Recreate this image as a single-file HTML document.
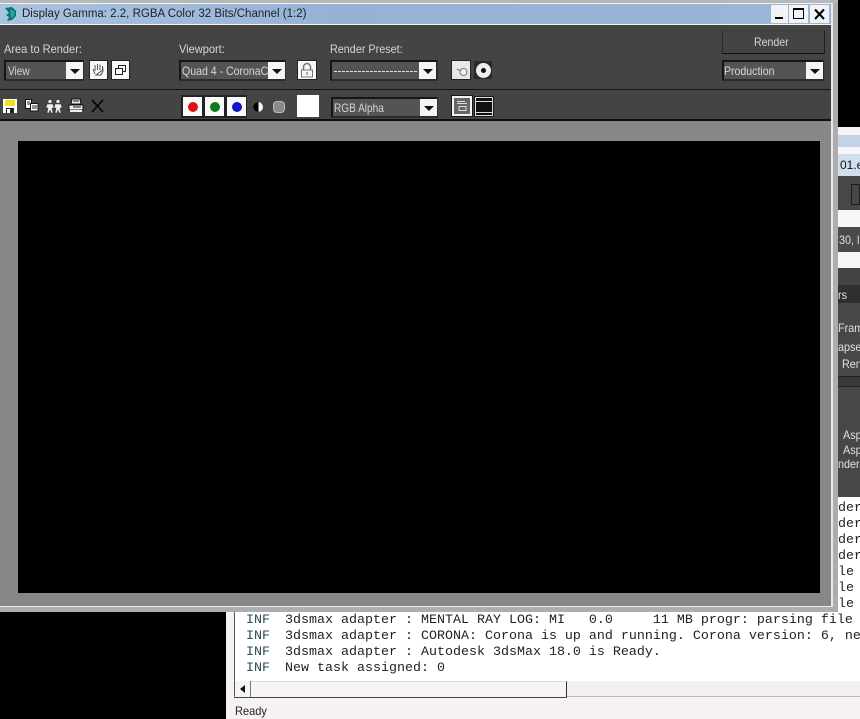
<!DOCTYPE html>
<html><head><meta charset="utf-8">
<style>
html,body{margin:0;padding:0;background:#000}
#p{position:relative;width:860px;height:719px;overflow:hidden;background:#000;font-family:"Liberation Sans",sans-serif}
#p div,#p svg{position:absolute}
.t{color:#d6d6d4;font-size:12px;white-space:nowrap;line-height:14px;transform-origin:0 50%}
.dd{background:#545552;border:2px solid #161616;border-right-color:#2c2c2c;border-bottom-color:#2c2c2c;box-sizing:border-box;height:21px;overflow:hidden}
.ar{background:#f4f4f4;width:17px;height:17px;top:60px}
.ar:after{content:"";position:absolute;left:4px;top:7px;border:5px solid transparent;border-top:5px solid #111;border-bottom:0}
.wb{background:#f8f8f8;box-shadow:0 0 0 1px #222}
.m{font-family:"Liberation Mono",monospace;font-size:13.33px;line-height:16px;color:#222;white-space:pre}
.inf{color:#2d4a5c}
.rt{color:#e0e0e0;font-size:12px;line-height:14px;white-space:nowrap;transform-origin:0 50%;transform:scaleX(.9)}
</style></head><body><div id="p">

<!-- background right-hand app -->
<div style="left:838px;top:127px;width:22px;height:376px;background:#474846"></div>
<div style="left:838px;top:127px;width:22px;height:8px;background:#f4f4f6"></div>
<div style="left:838px;top:135px;width:22px;height:12px;background:#c4d2e6"></div>
<div style="left:838px;top:147px;width:22px;height:7px;background:#f8f6f6"></div>
<div style="left:838px;top:154px;width:22px;height:22px;background:#cfdfee"></div>
<div style="left:840px;top:157px;color:#111;font-size:12px;line-height:16px;white-space:nowrap">01.e</div>
<div style="left:851px;top:184px;width:9px;height:21px;border:1px solid #1c1c1c;box-sizing:border-box"></div>
<div style="left:838px;top:210px;width:22px;height:17px;background:#f8f6f6"></div>
<div style="left:838px;top:227px;width:22px;height:25px;background:#4a4a48"></div>
<div class="rt" style="left:839px;top:233px">30, l</div>
<div style="left:838px;top:252px;width:22px;height:16px;background:#f8f6f6"></div>
<div style="left:838px;top:268px;width:22px;height:17px;background:#444542"></div>
<div style="left:838px;top:285px;width:22px;height:18px;background:#2f2f2f"></div>
<div class="rt" style="left:838px;top:288px">rs</div>
<div class="rt" style="left:838px;top:321px">Fram</div>
<div class="rt" style="left:838px;top:340px">apse</div>
<div class="rt" style="left:842px;top:357px">Ren</div>
<div style="left:838px;top:376px;width:22px;height:11px;background:#3a3a38;border-top:1px solid #222;border-bottom:1px solid #222;box-sizing:border-box"></div>
<div class="rt" style="left:843px;top:428px">Asp</div>
<div class="rt" style="left:843px;top:443px">Asp</div>
<div class="rt" style="left:838px;top:457px">nder</div>
<div style="left:838px;top:497px;width:22px;height:6px;background:#fff"></div>
<div style="left:838px;top:503px;width:22px;height:110px;background:#fff"></div>
<div class="m" style="left:838px;top:501px">der
der
der
der
le
le
le</div>

<!-- log panel -->
<div style="left:226px;top:612px;width:634px;height:107px;background:#f6f2f2"></div>
<div style="left:234px;top:612px;width:626px;height:69px;background:#fff;border-left:1px solid #555;box-sizing:border-box"></div>
<div class="m inf" style="left:246px;top:613px">INF
INF
INF
INF</div>
<div class="m" style="left:285px;top:613px">3dsmax adapter : MENTAL RAY LOG: MI   0.0     11 MB progr: parsing file
3dsmax adapter : CORONA: Corona is up and running. Corona version: 6, ne
3dsmax adapter : Autodesk 3dsMax 18.0 is Ready.
New task assigned: 0</div>
<!-- scrollbar -->
<div style="left:234px;top:681px;width:626px;height:16px;background:#f2efef;border-left:1px solid #555;border-bottom:1px solid #bbb;box-sizing:border-box"></div>
<div style="left:235px;top:681px;width:16px;height:16px;background:#f4f4f4;border-right:1px solid #777;box-sizing:border-box"></div>
<div style="left:240px;top:685px;width:0;height:0;border:4px solid transparent;border-right:5px solid #111;border-left:0"></div>
<div style="left:251px;top:681px;width:316px;height:17px;background:#f6f4f4;border-right:1px solid #333;border-bottom:1px solid #333;border-top:1px solid #ddd;box-sizing:border-box"></div>
<div style="left:234px;top:697px;width:333px;height:1px;background:#444"></div>
<div class="t" style="left:235px;top:704px;color:#222;transform:scaleX(.92)">Ready</div>

<!-- main window -->
<div style="left:0;top:0;width:838px;height:612px;background:#adadad"></div>
<div style="left:0;top:0;width:838px;height:3px;background:#b8b8b8"></div>
<div style="left:0;top:3px;width:832px;height:1px;background:#f2f2f2"></div>
<div style="left:0;top:4px;width:831px;height:20px;background:linear-gradient(90deg,#a9c3e0,#96b3d6 40%,#9ab6d6)"></div>
<div style="left:0;top:24px;width:832px;height:1px;background:#f4f4f4"></div>
<div style="left:831px;top:3px;width:2px;height:604px;background:#e8e8e8"></div>
<div style="left:0;top:25px;width:831px;height:64px;background:#444542"></div>
<div style="left:0;top:89px;width:831px;height:1px;background:#151515"></div>
<div style="left:0;top:90px;width:831px;height:29px;background:#444542"></div>
<div style="left:0;top:119px;width:831px;height:2px;background:#101010"></div>
<div style="left:0;top:121px;width:831px;height:485px;background:#878787"></div>
<div style="left:0;top:606px;width:833px;height:1px;background:#ececec"></div>
<div style="left:18px;top:141px;width:802px;height:452px;background:#000"></div>

<!-- title -->
<svg style="left:3px;top:6px" width="15" height="16" viewBox="0 0 15 16"><rect width="15" height="16" fill="#9fc9d8"/><path d="M2 2 L9 1 L13 5 L13 10 L9 14 L4 15 L6 11 L3 9 L6 7Z" fill="#0f6f78"/><path d="M7 3 L12 6 L11 10 L8 12Z" fill="#2aa7a5"/></svg>
<div style="left:22px;top:7px;color:#222;font-size:11.5px;line-height:15px;white-space:nowrap">Display Gamma: 2.2, RGBA Color 32 Bits/Channel (1:2)</div>
<div style="left:771px;top:5px;width:17px;height:18px;background:#f2f3f6"></div>
<div style="left:775px;top:17px;width:8px;height:2px;background:#000"></div>
<div style="left:789px;top:5px;width:19px;height:18px;background:#f2f3f6"></div>
<div style="left:793px;top:8px;width:11px;height:11px;border:1px solid #000;border-top-width:2px;box-sizing:border-box"></div>
<div style="left:810px;top:5px;width:19px;height:18px;background:#f2f3f6"></div>
<svg style="left:810px;top:5px" width="19" height="18"><path d="M5 4.5 L14 14 M14 4.5 L5 14" stroke="#000" stroke-width="2"/></svg>

<!-- labels -->
<div class="t" style="left:4px;top:42px;transform:scaleX(.92)">Area to Render:</div>
<div class="t" style="left:179px;top:42px;transform:scaleX(.92)">Viewport:</div>
<div class="t" style="left:330px;top:42px;transform:scaleX(.9)">Render Preset:</div>

<!-- area dropdown -->
<div class="dd" style="left:4px;top:60px;width:80px"></div>
<div class="t" style="left:8px;top:64px;transform:scaleX(.84)">View</div>
<div class="ar" style="left:66px;top:62px"></div>
<div class="wb" style="left:90px;top:61px;width:17px;height:18px"></div>
<svg style="left:90px;top:61px" width="17" height="18" viewBox="0 0 17 18"><path d="M5 13 L3 8 M5 10 L5 4 M7.500 9 L7.500 3 M10 9 L10 3.500 M12.500 9 L12.500 5 L13 10 L11 14 L6 14 Z" fill="none" stroke="#555" stroke-width="1"/></svg>
<div class="wb" style="left:112px;top:61px;width:17px;height:18px"></div>
<svg style="left:112px;top:61px" width="17" height="18"><path d="M3.500 7.500h7v6h-7z M6.500 7.500v-3h7v6h-3" fill="none" stroke="#222" stroke-width="1"/></svg>

<!-- viewport dropdown -->
<div class="dd" style="left:179px;top:60px;width:107px"></div>
<div style="left:182px;top:62px;width:86px;height:17px;overflow:hidden"><div class="t" style="left:0;top:2px;transform:scaleX(.88)">Quad 4 - CoronaCam</div></div>
<div class="ar" style="left:268px;top:62px"></div>
<div class="wb" style="left:298px;top:61px;width:18px;height:18px"></div>
<svg style="left:298px;top:61px" width="18" height="18"><path d="M5.500 9V6a3.500 3.500 0 0 1 7 0v3" fill="none" stroke="#777" stroke-width="1.500"/><rect x="3.500" y="9" width="11" height="7" fill="none" stroke="#777"/><path d="M9 11v3" stroke="#666"/></svg>

<!-- preset dropdown -->
<div class="dd" style="left:330px;top:60px;width:108px"></div>
<div style="left:334px;top:71px;width:84px;height:1px;background:repeating-linear-gradient(90deg,#ddd 0 3px,#666 3px 4px)"></div>
<div class="ar" style="left:419px;top:62px"></div>
<div style="left:452px;top:61px;width:18px;height:18px;background:#e8e8e8;box-shadow:0 0 0 1px #222"></div>
<svg style="left:452px;top:61px" width="18" height="18"><path d="M8 11a3.500 3.500 0 1 0 7 0a3.500 3.500 0 1 0-7 0M5 8l4 2" fill="#f2f2f2" stroke="#777"/></svg>
<div style="left:474px;top:61px;width:18px;height:18px;background:#2a2a2a"></div>
<div style="left:476px;top:63px;width:15px;height:15px;border-radius:50%;background:#efefef"></div>
<div style="left:481px;top:68px;width:5px;height:5px;border-radius:50%;background:#111"></div>

<!-- render -->
<div style="left:722px;top:30px;width:103px;height:24px;border:1px solid #2a2a2a;border-right-color:#1e1e1e;border-bottom-color:#111;border-top-color:#3a3a38;box-sizing:border-box"></div>
<div class="t" style="left:754px;top:35px;transform:scaleX(.88)">Render</div>
<div class="dd" style="left:722px;top:60px;width:102px"></div>
<div class="t" style="left:724px;top:64px;transform:scaleX(.88)">Production</div>
<div class="ar" style="left:806px;top:62px"></div>

<!-- toolbar 2 -->
<svg style="left:3px;top:99px" width="15" height="15"><rect width="14" height="14" fill="#fff"/><rect x="2" y="1" width="10" height="6" fill="#efe320"/><rect x="3" y="9" width="8" height="5" fill="#222"/><rect x="4" y="10" width="3" height="4" fill="#fff"/></svg>
<svg style="left:24px;top:98px" width="16" height="15"><path d="M1.500 1.500h6v9h-6z" fill="#fff" stroke="#111"/><path d="M6.500 5.500h7.500v7.500h-7.500z" fill="#fff" stroke="#112"/><path d="M8 8h5M8 10h5M3 4h3M3 6h3" stroke="#223"/></svg>
<svg style="left:45px;top:99px" width="18" height="15"><g fill="#eee" stroke="#333" stroke-width=".5"><circle cx="5" cy="2.500" r="2"/><circle cx="13" cy="2.500" r="2"/><path d="M2 5h6l1 4H7l1 5H6l-1-3-1 3H2l1-5H1z"/><path d="M10 5h6l1 4h-2l1 5h-2l-1-3-1 3h-2l1-5H9z"/></g></svg>
<svg style="left:68px;top:98px" width="16" height="15"><path d="M4 1h8l1 5H3z" fill="#eee" stroke="#111"/><path d="M1 7h14v5H1z" fill="#f2f2f2" stroke="#111"/><path d="M2 13h12" stroke="#eee" stroke-width="2"/><path d="M5 3h6M5 9h8" stroke="#111"/></svg>
<svg style="left:90px;top:98px" width="15" height="16"><path d="M2 2L13 14M13 2L2 14" stroke="#0a0a0a" stroke-width="1.800"/></svg>

<div style="left:181px;top:95px;width:66px;height:23px;background:#222"></div>
<div style="left:183px;top:97px;width:19px;height:19px;background:#fafafa"></div>
<div style="left:205px;top:97px;width:19px;height:19px;background:#fafafa"></div>
<div style="left:227px;top:97px;width:19px;height:19px;background:#fafafa"></div>
<div style="left:188px;top:102px;width:10px;height:10px;border-radius:50%;background:#e0101a"></div>
<div style="left:210px;top:102px;width:10px;height:10px;border-radius:50%;background:#0f7a1c"></div>
<div style="left:232px;top:102px;width:10px;height:10px;border-radius:50%;background:#1414cc"></div>
<svg style="left:252px;top:101px" width="12" height="12"><circle cx="6" cy="6" r="5" fill="#f4f4f4"/><path d="M6 1a5 5 0 0 0 0 10z" fill="#000"/><path d="M6 1v10" stroke="#000" stroke-width="1"/></svg>
<div style="left:274px;top:102px;width:10px;height:10px;border-radius:3px;background:#8a8a8a;box-shadow:0 0 0 1px #bbb"></div>
<div style="left:297px;top:95px;width:22px;height:22px;background:#fff"></div>

<div class="dd" style="left:331px;top:97px;width:107px"></div>
<div class="t" style="left:334px;top:101px;transform:scaleX(.84)">RGB Alpha</div>
<div class="ar" style="left:420px;top:99px"></div>

<div style="left:452px;top:96px;width:20px;height:20px;background:#666;border:2px solid #f4f4f4;box-sizing:border-box;box-shadow:0 0 0 1px #1a1a1a"></div>
<svg style="left:452px;top:96px" width="20" height="20"><path d="M5 5.500h8M5 7.500h10M7 10.500h7v4H7z" fill="none" stroke="#ddd"/></svg>
<div style="left:475px;top:97px;width:18px;height:19px;background:#111;border:1px solid #ddd;box-sizing:border-box;box-shadow:0 0 0 1px #1a1a1a"></div>
<div style="left:476px;top:101px;width:16px;height:1px;background:#ddd"></div>
<div style="left:476px;top:112px;width:16px;height:1px;background:#ddd"></div>

</div></body></html>
